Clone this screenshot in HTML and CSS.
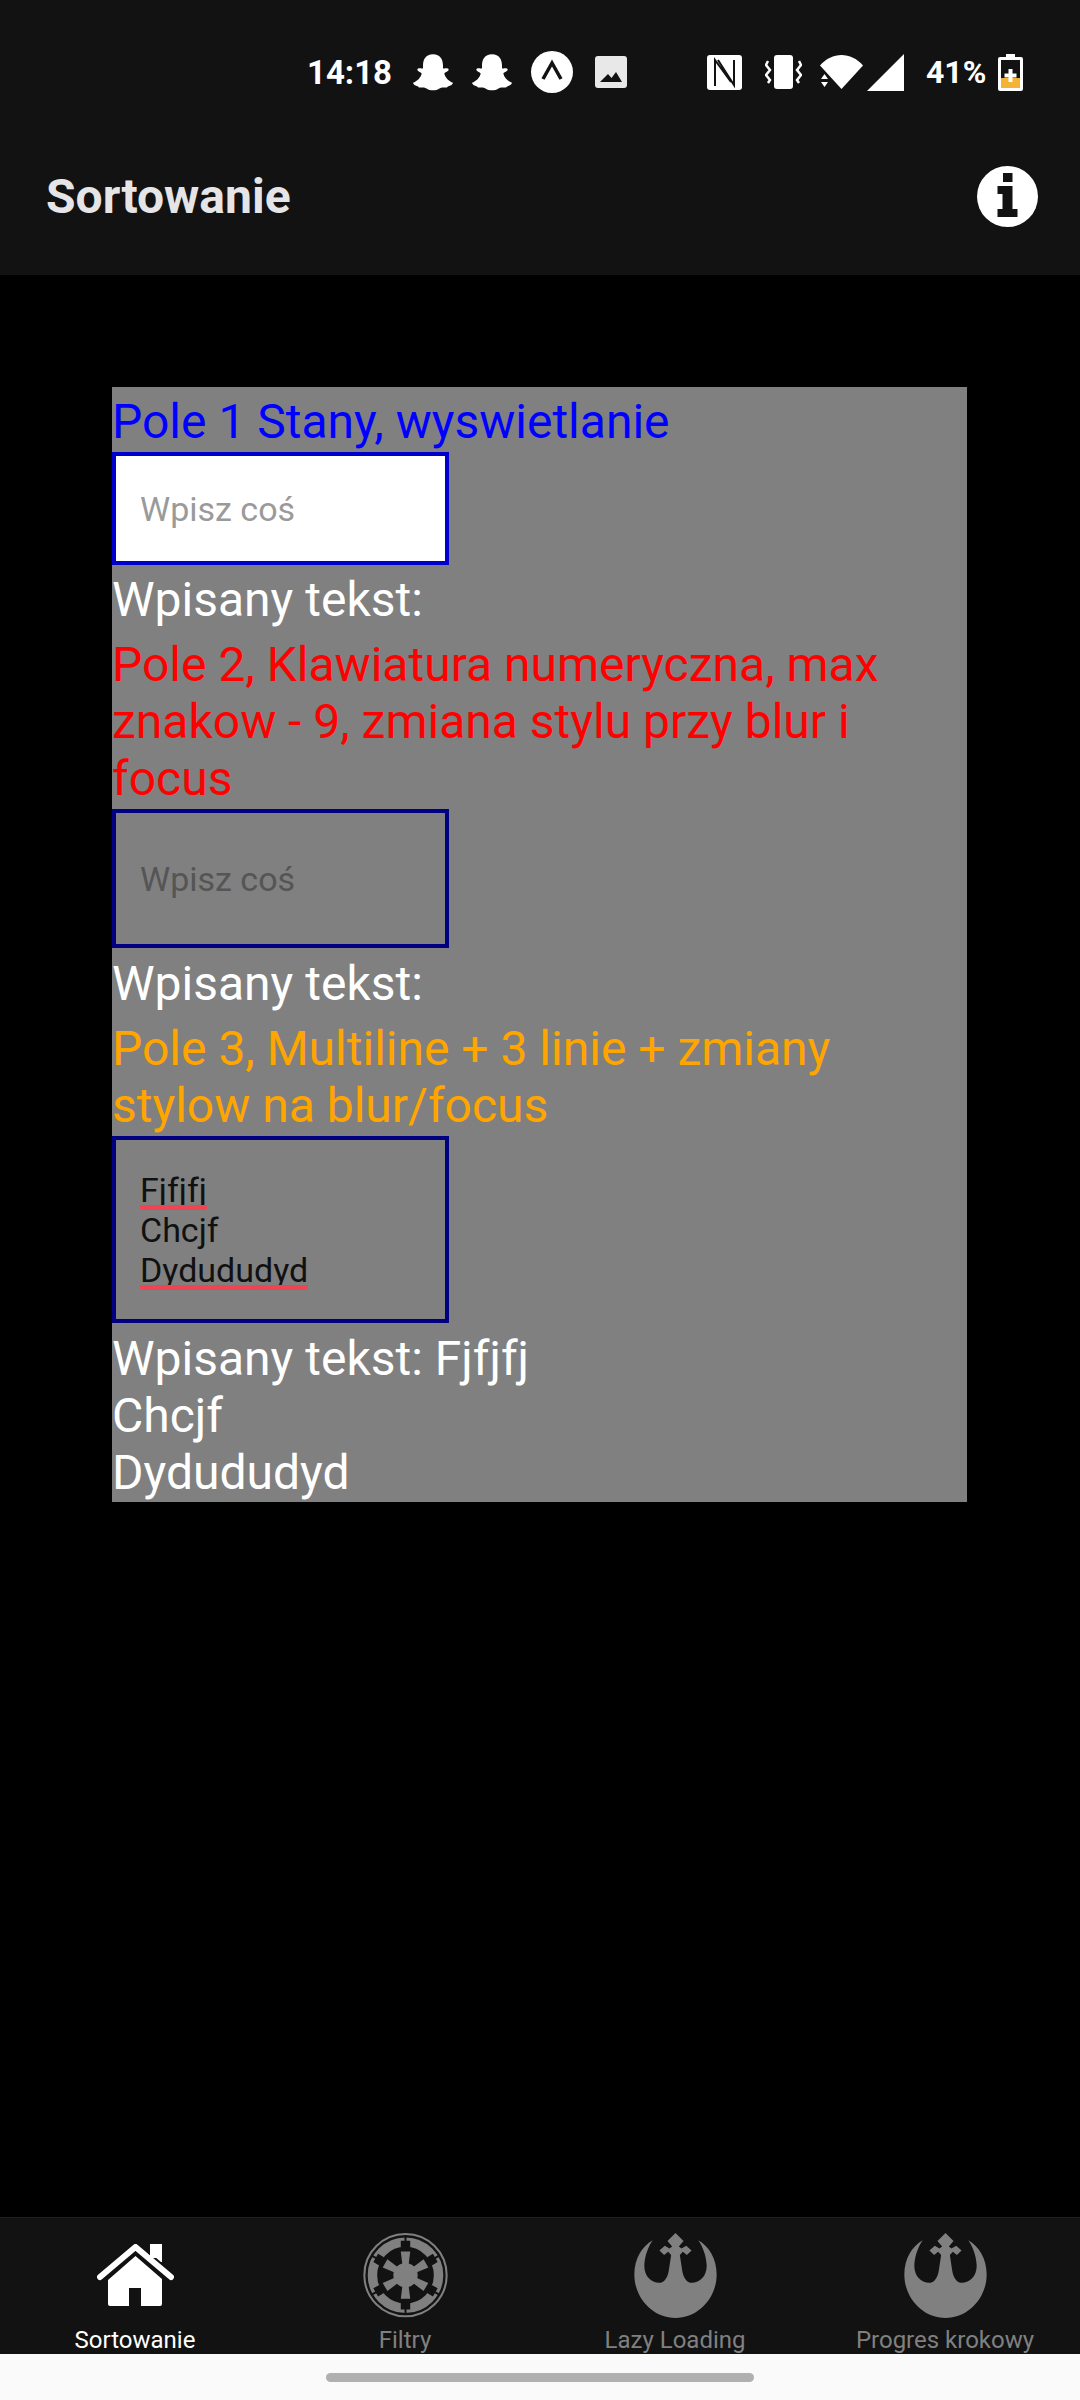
FILE: index.html
```html
<!DOCTYPE html>
<html lang="pl">
<head>
    <meta charset="UTF-8">
    <meta name="viewport" content="width=device-width, initial-scale=1.0">
    <title>Sortowanie</title>
    <link rel="stylesheet" href="styles.css">
</head>
<body>

<svg class="icon-defs" aria-hidden="true">
    <symbol id="ghost" viewBox="0 0 120 110">
        <path d="M60 0C82 0 90 16 90 34L90 42C96 44 105 40 107 46C107 52 96 54 94 58C96 70 108 82 120 86C118 96 106 94 102 100C92 100 85 98 78 104C70 110 50 110 42 104C35 98 28 100 18 100C14 94 2 96 0 86C12 82 24 70 26 58C24 54 13 52 13 46C15 40 24 44 30 42L30 34C30 16 38 0 60 0Z" fill="#fff"/>
    </symbol>
    <symbol id="rebel" viewBox="27 18 246 254">
        <path d="M150 18L174 42L160 58L168 64L182 56L198 70L184 84L172 74L163 84C165 100 168 115 170 130C174 155 186 167 198 167C225 165 245 145 243 112C241 85 232 60 218 40C250 58 273 95 273 142C273 212 218 272 150 272C82 272 27 212 27 142C27 95 50 58 82 40C68 60 59 85 57 112C55 145 75 165 102 167C114 167 126 155 130 130C132 115 135 100 137 84L128 74L116 84L102 70L118 56L132 64L140 58L126 42Z" fill="#808080"/>
    </symbol>
</svg>

<div class="screen">

    <div class="status-bar">
        <span class="clock">14:18</span>
        <div class="status-left">
            <svg class="ghost"><use href="#ghost"/></svg>
            <svg class="ghost"><use href="#ghost"/></svg>
            <svg class="round-app" viewBox="0 0 42 42"><circle cx="21" cy="21" r="21" fill="#fff"/><path d="M12 28L21 12L30 28" fill="none" stroke="#121212" stroke-width="3.500"/></svg>
            <svg class="photo" viewBox="0 0 32 32"><rect width="32" height="32" rx="3" fill="#e8e8e8"/><path d="M5 26L13 18L16.500 22L21 16L27 26Z" fill="#121212"/></svg>
        </div>
        <div class="status-right">
            <svg class="nfc" viewBox="0 0 35 35"><rect width="35" height="35" rx="3" fill="#fff"/><path d="M8 31V5L24 27M11 5L27 30V5" fill="none" stroke="#121212" stroke-width="2"/></svg>
            <svg class="vibrate" viewBox="0 0 37 34"><rect x="9" y="0" width="19" height="34" rx="3" fill="#fff"/><path d="M3 6L1 10L5 15L1 20L5 25L3 28M34 6L36 10L32 15L36 20L32 25L34 28" fill="none" stroke="#fff" stroke-width="2.500"/></svg>
            <svg class="wifi" viewBox="0 0 43 34"><path d="M0 10.500C12 -3.500 31 -3.500 43 10.500L21.500 34Z" fill="#fff"/><path d="M1 24H8L4.500 19ZM1 27H8L4.500 32Z" fill="#fff"/></svg>
            <svg class="signal" viewBox="0 0 37 37"><path d="M37 0V37H0Z" fill="#fff"/></svg>
            <span class="battery-text">41%</span>
            <svg class="battery" viewBox="0 0 25 37"><path d="M8 0H17V3H23Q25 3 25 5V35Q25 37 23 37H2Q0 37 0 35V5Q0 3 2 3H8Z" fill="#fff"/><rect x="3" y="6" width="19" height="18" fill="#121212"/><rect x="3" y="24" width="19" height="10" fill="#f5b335"/><path d="M10.500 15H14.500V19.500H18.500V23.500H14.500V28H10.500V23.500H6.500V19.500H10.500Z" fill="#fff"/></svg>
        </div>
    </div>

    <div class="app-header">
        <span class="app-title">Sortowanie</span>
        <svg class="info-icon" viewBox="0 0 61 61"><circle cx="30.500" cy="30.500" r="30.500" fill="#fff"/><path d="M26 7H35.500V16H26ZM20.500 20H35.500V43H40.500V51H20.500V43H25.500V28H20.500Z" fill="#121212"/></svg>
    </div>

    <div class="content">
        <div class="form-box">
            <div class="label label-blue">Pole 1 Stany, wyswietlanie</div>
            <div class="field field-focus"><span class="placeholder">Wpisz coś</span></div>
            <div class="label">Wpisany tekst:</div>

            <div class="label label-red section-title">Pole 2, Klawiatura numeryczna, max znakow - 9, zmiana stylu przy blur i focus</div>
            <div class="field field-blur"><span class="placeholder">Wpisz coś</span></div>
            <div class="label">Wpisany tekst:</div>

            <div class="label label-orange section-title">Pole 3, Multiline + 3 linie + zmiany stylow na blur/focus</div>
            <div class="field field-blur field-multi">
                <span class="typed misspelled">Fjfjfj</span>
                <span class="typed">Chcjf</span>
                <span class="typed misspelled">Dydududyd</span>
            </div>
            <div class="label">Wpisany tekst: Fjfjfj<br>Chcjf<br>Dydududyd</div>
        </div>
    </div>

    <div class="tab-bar">
        <div class="tab tab-active">
            <div class="tab-icon">
                <svg class="home-icon" viewBox="0 0 77 62">
                    <path d="M53 0H65V18H53Z" fill="#fff"/>
                    <path d="M3 33L38.500 3L74 33" fill="none" stroke="#121212" stroke-width="10" stroke-linecap="round" stroke-linejoin="round"/>
                    <path d="M53 0H65V14H53Z" fill="#fff"/>
                    <path d="M3 33L38.500 3L74 33" fill="none" stroke="#fff" stroke-width="6" stroke-linecap="round" stroke-linejoin="round"/>
                    <path d="M38.500 12L65 35V60Q65 62 63 62H44V44H32V62H13Q11 62 11 60V36Z" fill="#fff"/>
                </svg>
            </div>
            <span>Sortowanie</span>
        </div>
        <div class="tab">
            <div class="tab-icon">
                <svg class="emblem" viewBox="24 20 252 252">
                    <circle cx="150" cy="145" r="122" fill="none" stroke="#808080" stroke-width="6"/>
                    <circle cx="150" cy="145" r="98" fill="none" stroke="#808080" stroke-width="28"/>
                    <g fill="#121212">
                        <path d="M136 43H164V63H136ZM147 31H153V43H147Z"/>
                        <path d="M136 43H164V63H136ZM147 31H153V43H147Z" transform="rotate(60 150 145)"/>
                        <path d="M136 43H164V63H136ZM147 31H153V43H147Z" transform="rotate(120 150 145)"/>
                        <path d="M136 43H164V63H136ZM147 31H153V43H147Z" transform="rotate(180 150 145)"/>
                        <path d="M136 43H164V63H136ZM147 31H153V43H147Z" transform="rotate(240 150 145)"/>
                        <path d="M136 43H164V63H136ZM147 31H153V43H147Z" transform="rotate(300 150 145)"/>
                    </g>
                    <g fill="#808080">
                        <circle cx="150" cy="145" r="36"/>
                        <path d="M141 115H159L164 75H136Z"/>
                        <path d="M141 115H159L164 75H136Z" transform="rotate(60 150 145)"/>
                        <path d="M141 115H159L164 75H136Z" transform="rotate(120 150 145)"/>
                        <path d="M141 115H159L164 75H136Z" transform="rotate(180 150 145)"/>
                        <path d="M141 115H159L164 75H136Z" transform="rotate(240 150 145)"/>
                        <path d="M141 115H159L164 75H136Z" transform="rotate(300 150 145)"/>
                    </g>
                </svg>
            </div>
            <span>Filtry</span>
        </div>
        <div class="tab">
            <div class="tab-icon">
                <svg class="emblem"><use href="#rebel"/></svg>
            </div>
            <span>Lazy Loading</span>
        </div>
        <div class="tab">
            <div class="tab-icon">
                <svg class="emblem"><use href="#rebel"/></svg>
            </div>
            <span>Progres krokowy</span>
        </div>
    </div>

    <div class="nav-bar">
        <div class="nav-handle"></div>
    </div>

</div>

</body>
</html>
```

FILE: styles.css
```css
* {
    box-sizing: border-box;
}

body {
    margin: 0;
    padding: 0;
    background-color: #000;
    font-family: Roboto, "Liberation Sans", sans-serif;
}

.icon-defs {
    display: none;
}

.screen {
    display: flex;
    flex-direction: column;
    width: 1080px;
    height: 2400px;
    overflow: hidden;
}

/* status bar */

.status-bar {
    display: flex;
    align-items: center;
    justify-content: space-between;
    height: 144px;
    padding: 0 57px 0 307px;
    background-color: #121212;
    color: #fff;
}

.clock {
    width: 84px;
    font-size: 33px;
    font-weight: 700;
}

.status-left {
    display: flex;
    align-items: center;
    flex: 1;
    padding-left: 22px;
}

.status-right {
    display: flex;
    align-items: center;
}

.ghost {
    width: 40px;
    height: 37px;
    margin-right: 19px;
}

.round-app {
    width: 42px;
    height: 42px;
    margin-right: 22px;
}

.photo {
    width: 32px;
    height: 32px;
}

.nfc {
    width: 35px;
    height: 35px;
    margin-right: 23px;
}

.vibrate {
    width: 37px;
    height: 34px;
    margin-right: 18px;
}

.wifi {
    width: 43px;
    height: 34px;
    margin-right: 4px;
}

.signal {
    width: 37px;
    height: 37px;
    margin-right: 22px;
}

.battery-text {
    width: 72px;
    font-size: 32px;
    font-weight: 700;
}

.battery {
    width: 25px;
    height: 37px;
}

/* header */

.app-header {
    display: flex;
    align-items: center;
    justify-content: space-between;
    height: 131px;
    padding: 0 42px 27px 46px;
    background-color: #121212;
}

.app-title {
    font-size: 48px;
    font-weight: 700;
    color: #e5e5e7;
}

.info-icon {
    width: 61px;
    height: 61px;
}

/* form */

.content {
    flex: 1;
    padding: 112px 113px 0 112px;
}

.form-box {
    height: 1115px;
    padding-top: 6px;
    background-color: #808080;
}

.label {
    font-size: 48px;
    line-height: 57px;
    color: #fff;
}

.section-title {
    margin-top: 8px;
}

.label-blue {
    color: #0000ff;
}

.label-red {
    color: #ff0000;
}

.label-orange {
    color: #ffa500;
}

.field {
    display: flex;
    flex-direction: column;
    justify-content: center;
    width: 337px;
    padding-left: 24px;
    font-size: 34px;
    line-height: 40px;
}

.field-focus {
    height: 113px;
    margin-top: 2px;
    margin-bottom: 6px;
    border: 4px solid #0000cd;
    background-color: #fff;
    color: #9a9a9a;
}

.field-blur {
    height: 139px;
    margin: 2px 0 7px;
    border: 4px solid #000080;
    color: #555;
}

.field-multi {
    height: 187px;
    color: #111;
}

.typed {
    align-self: flex-start;
}

.misspelled {
    position: relative;
}

.misspelled::after {
    content: "";
    position: absolute;
    left: 0;
    right: 0;
    bottom: 0;
    height: 5px;
    background-color: #ef4452;
}

/* tabs */

.tab-bar {
    display: grid;
    grid-template-columns: repeat(4, 270px);
    height: 137px;
    border-top: 1px solid #1f1f1f;
    background-color: #121212;
}

.tab {
    display: flex;
    flex-direction: column;
    align-items: center;
    font-size: 24px;
    color: #808080;
}

.tab-active {
    color: #fff;
}

.tab-icon {
    display: flex;
    align-items: center;
    justify-content: center;
    height: 109px;
    padding-top: 5px;
}

.tab span {
    line-height: 27px;
}

.home-icon {
    width: 77px;
    height: 62px;
}

.emblem {
    width: 85px;
    height: 85px;
}

/* android nav */

.nav-bar {
    display: flex;
    justify-content: center;
    height: 46px;
    padding-top: 19px;
    background-color: #fafafa;
}

.nav-handle {
    width: 428px;
    height: 9px;
    border-radius: 5px;
    background-color: #b0b0b0;
}
```
